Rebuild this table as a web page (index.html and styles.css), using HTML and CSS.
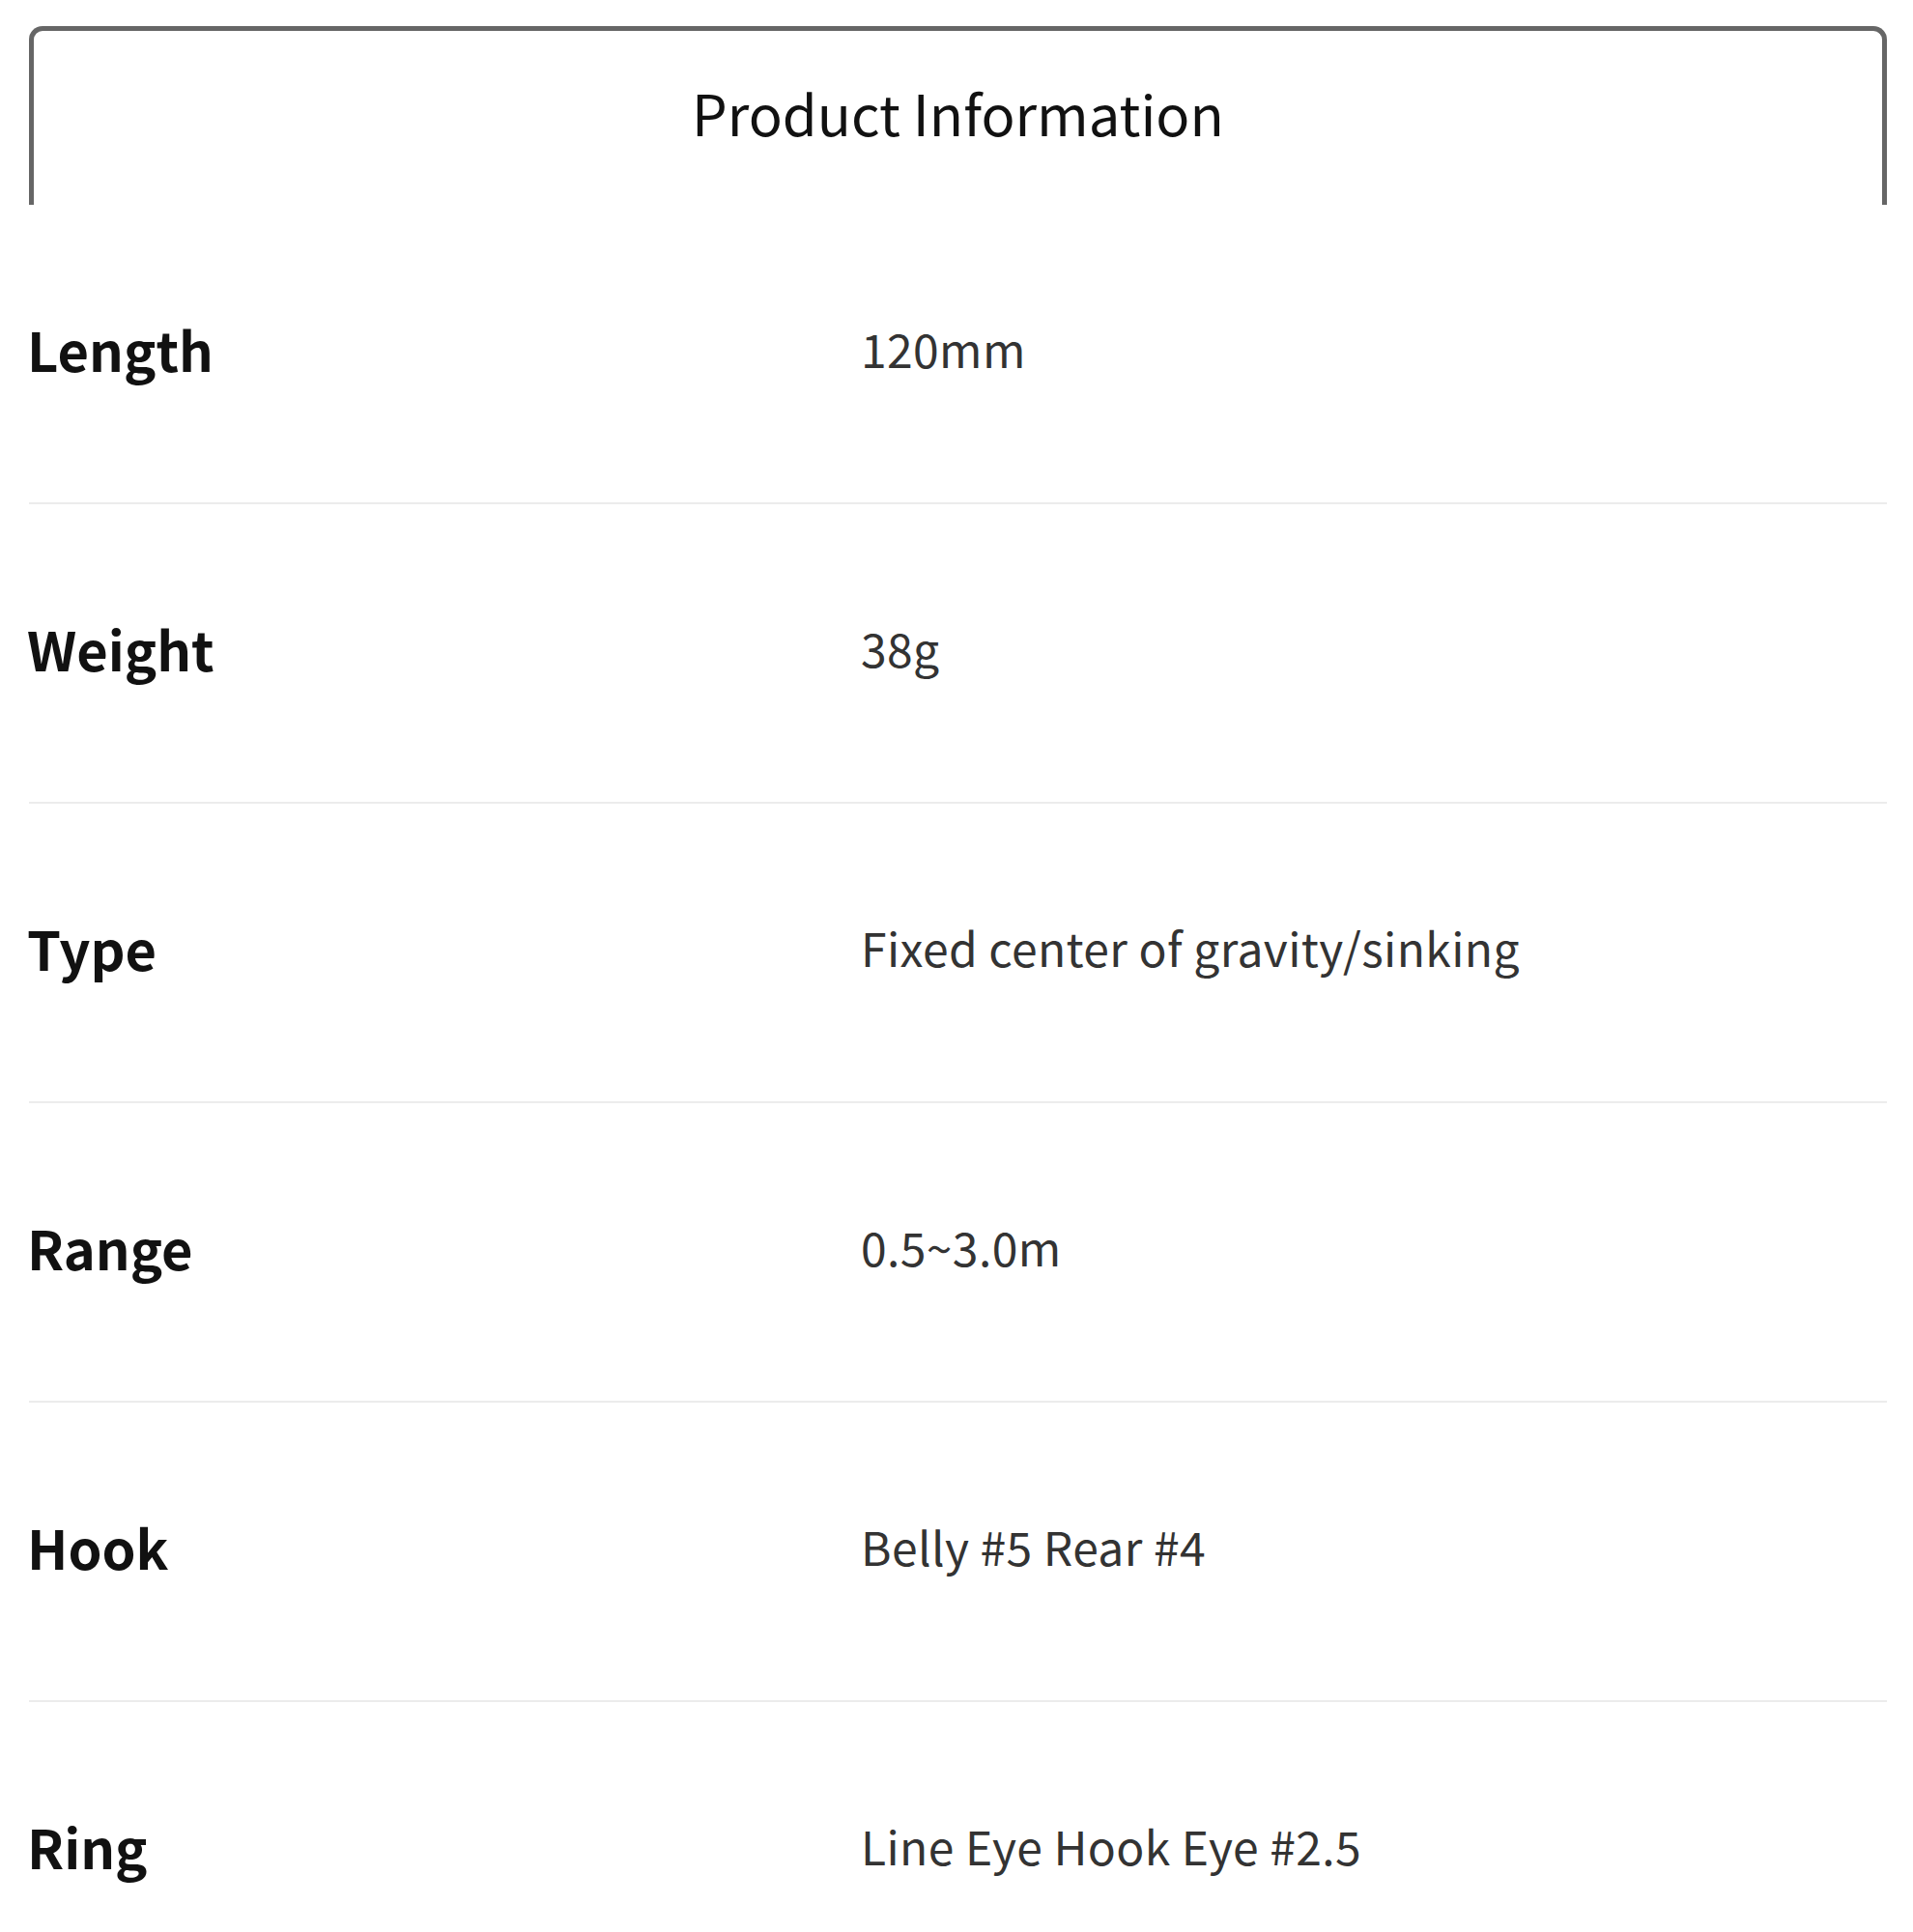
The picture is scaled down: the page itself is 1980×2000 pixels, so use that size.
FILE: index.html
```html
<!DOCTYPE html>
<html lang="en">
<head>
<meta charset="utf-8">
<title>Product Information</title>
<link rel="stylesheet" href="styles.css">
</head>
<body>
<div class="page">
  <div class="header-box">
    <h1 class="title">Product Information</h1>
  </div>
  <div class="specs">
    <div class="row"><div class="label">Length</div><div class="value">120mm</div></div>
    <div class="row"><div class="label">Weight</div><div class="value">38g</div></div>
    <div class="row"><div class="label">Type</div><div class="value">Fixed center of gravity/sinking</div></div>
    <div class="row"><div class="label">Range</div><div class="value">0.5~3.0m</div></div>
    <div class="row"><div class="label">Hook</div><div class="value">Belly #5 Rear #4</div></div>
    <div class="row"><div class="label">Ring</div><div class="value">Line Eye Hook Eye #2.5</div></div>
  </div>
</div>
</body>
</html>
```
FILE: styles.css
```css
html, body {
  margin: 0;
  padding: 0;
  background: #ffffff;
}
body {
  font-family: "Noto Sans CJK JP", "Noto Sans", sans-serif;
  color: #111;
}
.page {
  width: 1923px;
  padding: 27px 0 0 30px;
}
.header-box {
  box-sizing: border-box;
  height: 185px;
  padding-bottom: 12px;
  border: 5px solid #666;
  border-bottom: none;
  border-radius: 14px 14px 0 0;
  display: flex;
  align-items: center;
  justify-content: center;
}
.title {
  margin: 0;
  font-size: 58px;
  font-weight: 400;
  color: #111;
  line-height: 1;
}
.specs {
  display: flex;
  flex-direction: column;
}
.row {
  box-sizing: border-box;
  height: 310px;
  padding-bottom: 12px;
  border-bottom: 2px solid #ececec;
  display: flex;
  align-items: center;
}
.label {
  width: 861px;
  margin-left: -2px;
  padding-right: 2px;
  font-size: 56px;
  font-weight: 700;
  color: #111;
}
.value {
  font-size: 48px;
  letter-spacing: 0.4px;
  color: #333;
}
```
